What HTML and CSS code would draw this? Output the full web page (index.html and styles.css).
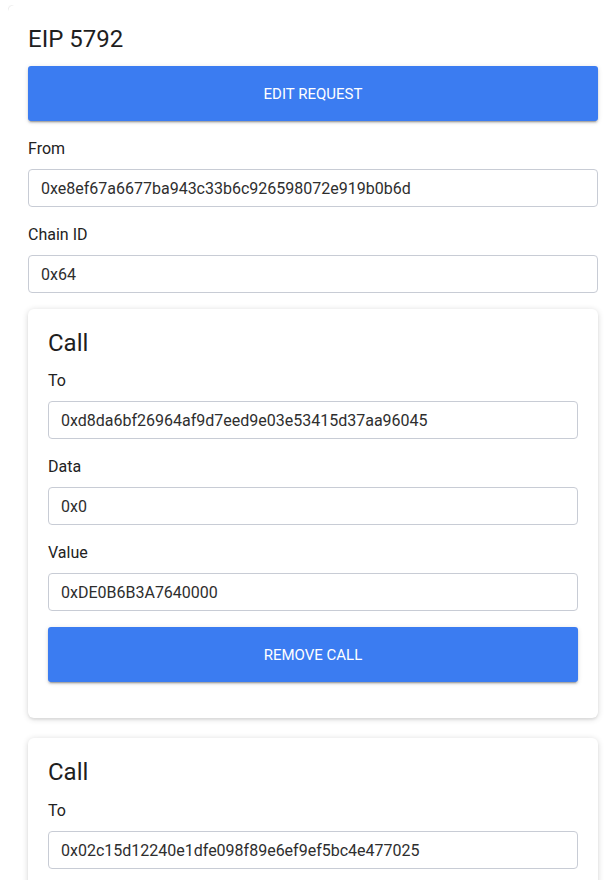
FILE: index.html
```html
<!DOCTYPE html>
<html lang="en">
<head>
<meta charset="utf-8">
<title>EIP 5792</title>
<link rel="stylesheet" href="styles.css">
</head>
<body>
  <div class="panel">
    <h1 class="panel-title">EIP 5792</h1>
    <button class="btn btn-edit" type="button">Edit request</button>

    <div class="field">
      <label class="field-label">From</label>
      <input class="field-input" type="text" value="0xe8ef67a6677ba943c33b6c926598072e919b0b6d">
    </div>

    <div class="field">
      <label class="field-label">Chain ID</label>
      <input class="field-input" type="text" value="0x64">
    </div>

    <div class="calls">
      <div class="call-card">
        <h2 class="call-title">Call</h2>
        <div class="field">
          <label class="field-label">To</label>
          <input class="field-input" type="text" value="0xd8da6bf26964af9d7eed9e03e53415d37aa96045">
        </div>
        <div class="field">
          <label class="field-label">Data</label>
          <input class="field-input" type="text" value="0x0">
        </div>
        <div class="field">
          <label class="field-label">Value</label>
          <input class="field-input" type="text" value="0xDE0B6B3A7640000">
        </div>
        <button class="btn" type="button">Remove call</button>
      </div>

      <div class="call-card call-card-last">
        <h2 class="call-title">Call</h2>
        <div class="field">
          <label class="field-label">To</label>
          <input class="field-input" type="text" value="0x02c15d12240e1dfe098f89e6ef9ef5bc4e477025">
        </div>
      </div>
    </div>
  </div>
</body>
</html>
```

FILE: styles.css
```css
html {
  overflow: hidden;
  background: #ffffff;
}

body {
  margin: 5px 0 0 8px;
  font-family: Roboto, "Liberation Sans", Arial, sans-serif;
  color: #212121;
  background: #ffffff;
}

.panel {
  width: 610px;
  box-sizing: border-box;
  padding: 20px;
  background: #ffffff;
  border-radius: 6px;
  box-shadow: 0 1px 3px rgba(0, 0, 0, 0.18), 0 0 1px rgba(0, 0, 0, 0.14);
  display: flex;
  flex-direction: column;
  gap: 16px;
}

.panel-title,
.call-title {
  margin: 0;
  font-size: 24px;
  font-weight: 400;
  line-height: 28px;
  color: #1e1e1e;
}

.panel-title {
  margin-bottom: -3px;
}

.call-title {
  margin-bottom: -4px;
}

.btn {
  display: flex;
  align-items: center;
  justify-content: center;
  width: 100%;
  height: 55px;
  border: 0;
  border-radius: 3px;
  background: #3b7cf1;
  color: #ffffff;
  font-family: Roboto, "Liberation Sans", Arial, sans-serif;
  font-size: 15px;
  font-weight: 400;
  text-transform: uppercase;
  box-shadow: 0 3px 1px -2px rgba(0, 0, 0, 0.2), 0 2px 2px 0 rgba(0, 0, 0, 0.14), 0 1px 5px 0 rgba(0, 0, 0, 0.12);
  padding: 0;
}

.field {
  display: flex;
  flex-direction: column;
  gap: 8px;
}

.field-label {
  font-size: 16px;
  line-height: 24px;
  color: #222222;
}

.field-input {
  box-sizing: border-box;
  width: 100%;
  height: 38px;
  margin: 0;
  padding: 8px 12px;
  border: 1px solid #c8ccd5;
  border-radius: 4px;
  font-family: Roboto, "Liberation Sans", Arial, sans-serif;
  font-size: 16px;
  line-height: 20px;
  color: #2e2e2e;
  background: #ffffff;
  outline: none;
}

.calls {
  display: flex;
  flex-direction: column;
  gap: 20px;
}

.call-card {
  display: flex;
  flex-direction: column;
  gap: 16px;
  padding: 20px 20px 36px;
  background: #ffffff;
  border-radius: 6px;
  box-shadow: 0 1px 6px rgba(0, 0, 0, 0.16), 0 2px 2px rgba(0, 0, 0, 0.05);
}

.call-card-last .field {
  margin-top: 1px;
}

.call-card-last {
  padding-bottom: 60px;
}
```
